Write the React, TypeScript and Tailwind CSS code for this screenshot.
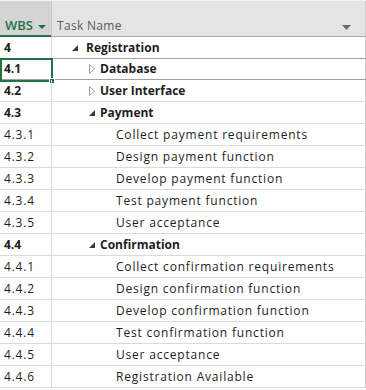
import React from "react"

type Row = { wbs: string; name: string; level: number; summary?: boolean; open?: boolean }

const rows: Row[] = [
  { wbs: "4", name: "Registration", level: 1, summary: true, open: true },
  { wbs: "4.1", name: "Database", level: 2, summary: true, open: false },
  { wbs: "4.2", name: "User Interface", level: 2, summary: true, open: false },
  { wbs: "4.3", name: "Payment", level: 2, summary: true, open: true },
  { wbs: "4.3.1", name: "Collect payment requirements", level: 3 },
  { wbs: "4.3.2", name: "Design payment function", level: 3 },
  { wbs: "4.3.3", name: "Develop payment function", level: 3 },
  { wbs: "4.3.4", name: "Test payment function", level: 3 },
  { wbs: "4.3.5", name: "User acceptance", level: 3 },
  { wbs: "4.4", name: "Confirmation", level: 2, summary: true, open: true },
  { wbs: "4.4.1", name: "Collect confirmation requirements", level: 3 },
  { wbs: "4.4.2", name: "Design confirmation function", level: 3 },
  { wbs: "4.4.3", name: "Develop confirmation function", level: 3 },
  { wbs: "4.4.4", name: "Test confirmation function", level: 3 },
  { wbs: "4.4.5", name: "User acceptance", level: 3 },
  { wbs: "4.4.6", name: "Registration Available", level: 3 },
]

const Toggle = ({ open }: { open?: boolean }) =>
  open ? (
    <svg width="6" height="6" viewBox="0 0 6 6" className="shrink-0">
      <polygon points="6,0 6,6 0,6" fill="#3a3a3a" />
    </svg>
  ) : (
    <svg width="6" height="10" viewBox="0 0 6 10" className="shrink-0">
      <polygon points="0.5,0.5 5.5,5 0.5,9.5" fill="none" stroke="#a0a0a0" strokeWidth="1" />
    </svg>
  )

export default function App() {
  return (
    <div className="w-[366px] h-[390px] overflow-hidden bg-white text-[12px] text-[#1e1e1e] font-['Segoe_UI','Open_Sans',sans-serif]">
      {/* header */}
      <div className="flex h-[37px] border-t border-[#f2f2f2] bg-[#e4e4e4] border-b border-b-[#a8a8a8]">
        <div className="w-[52px] shrink-0 bg-[#d4d4d4] border-r border-[#c8c8c8] relative flex items-end pb-[4px] pl-[5px]">
          <span className="text-[#217346] text-[13px] font-semibold leading-none">WBS</span>
          <svg width="8" height="4" viewBox="0 0 8 4" className="ml-[5px] mb-[3px]">
            <polygon points="0,0 8,0 4,4" fill="#217346" />
          </svg>
          <div className="absolute left-0 right-0 bottom-[-1px] h-[2px] bg-[#217346]" />
        </div>
        <div className="flex-1 flex items-end justify-between pb-[4px] pl-[5px] pr-[14px] border-r border-[#d0d0d0]">
          <span className="text-[#5a5a5a] leading-none tracking-[0.3px]">Task Name</span>
          <svg width="9" height="5" viewBox="0 0 9 5" className="mb-[2px]">
            <polygon points="0,0 9,0 4.5,5" fill="#6a6a6a" />
          </svg>
        </div>
      </div>

      {/* rows */}
      {rows.map((r, i) => {
        const selected = r.wbs === "4.1"
        return (
          <div
            key={i}
            className={`flex h-[22px] border-b ${selected ? "border-[#a0a0a0] -mt-px border-t" : "border-[#dadada]"}`}
          >
            <div
              className={`w-[52px] shrink-0 border-r border-[#dadada] flex items-center pl-[4px] relative ${r.summary ? "font-bold" : "tracking-[0.8px]"}`}
            >
              {r.wbs}
              {selected && (
                <>
                  <div className="absolute left-0 -top-px w-[53px] h-[24px] border-2 border-[#217346]" />
                  <div className="absolute left-[49px] top-[19px] w-[6px] h-[6px] bg-[#217346] border border-white" />
                </>
              )}
            </div>
            <div className="flex-1 flex items-center border-r border-[#d0d0d0] whitespace-nowrap">
              {r.summary ? (
                <div className={`flex items-center font-bold ${r.level === 1 ? "pl-[20px]" : "pl-[37px]"}`}>
                  <span className="w-[6px] flex">
                    <Toggle open={r.open} />
                  </span>
                  <span className={r.level === 1 ? "ml-[8px]" : "ml-[5px]"}>{r.name}</span>
                </div>
              ) : (
                <span className="pl-[64px] tracking-[0.8px]">{r.name}</span>
              )}
            </div>
          </div>
        )
      })}
    </div>
  )
}
